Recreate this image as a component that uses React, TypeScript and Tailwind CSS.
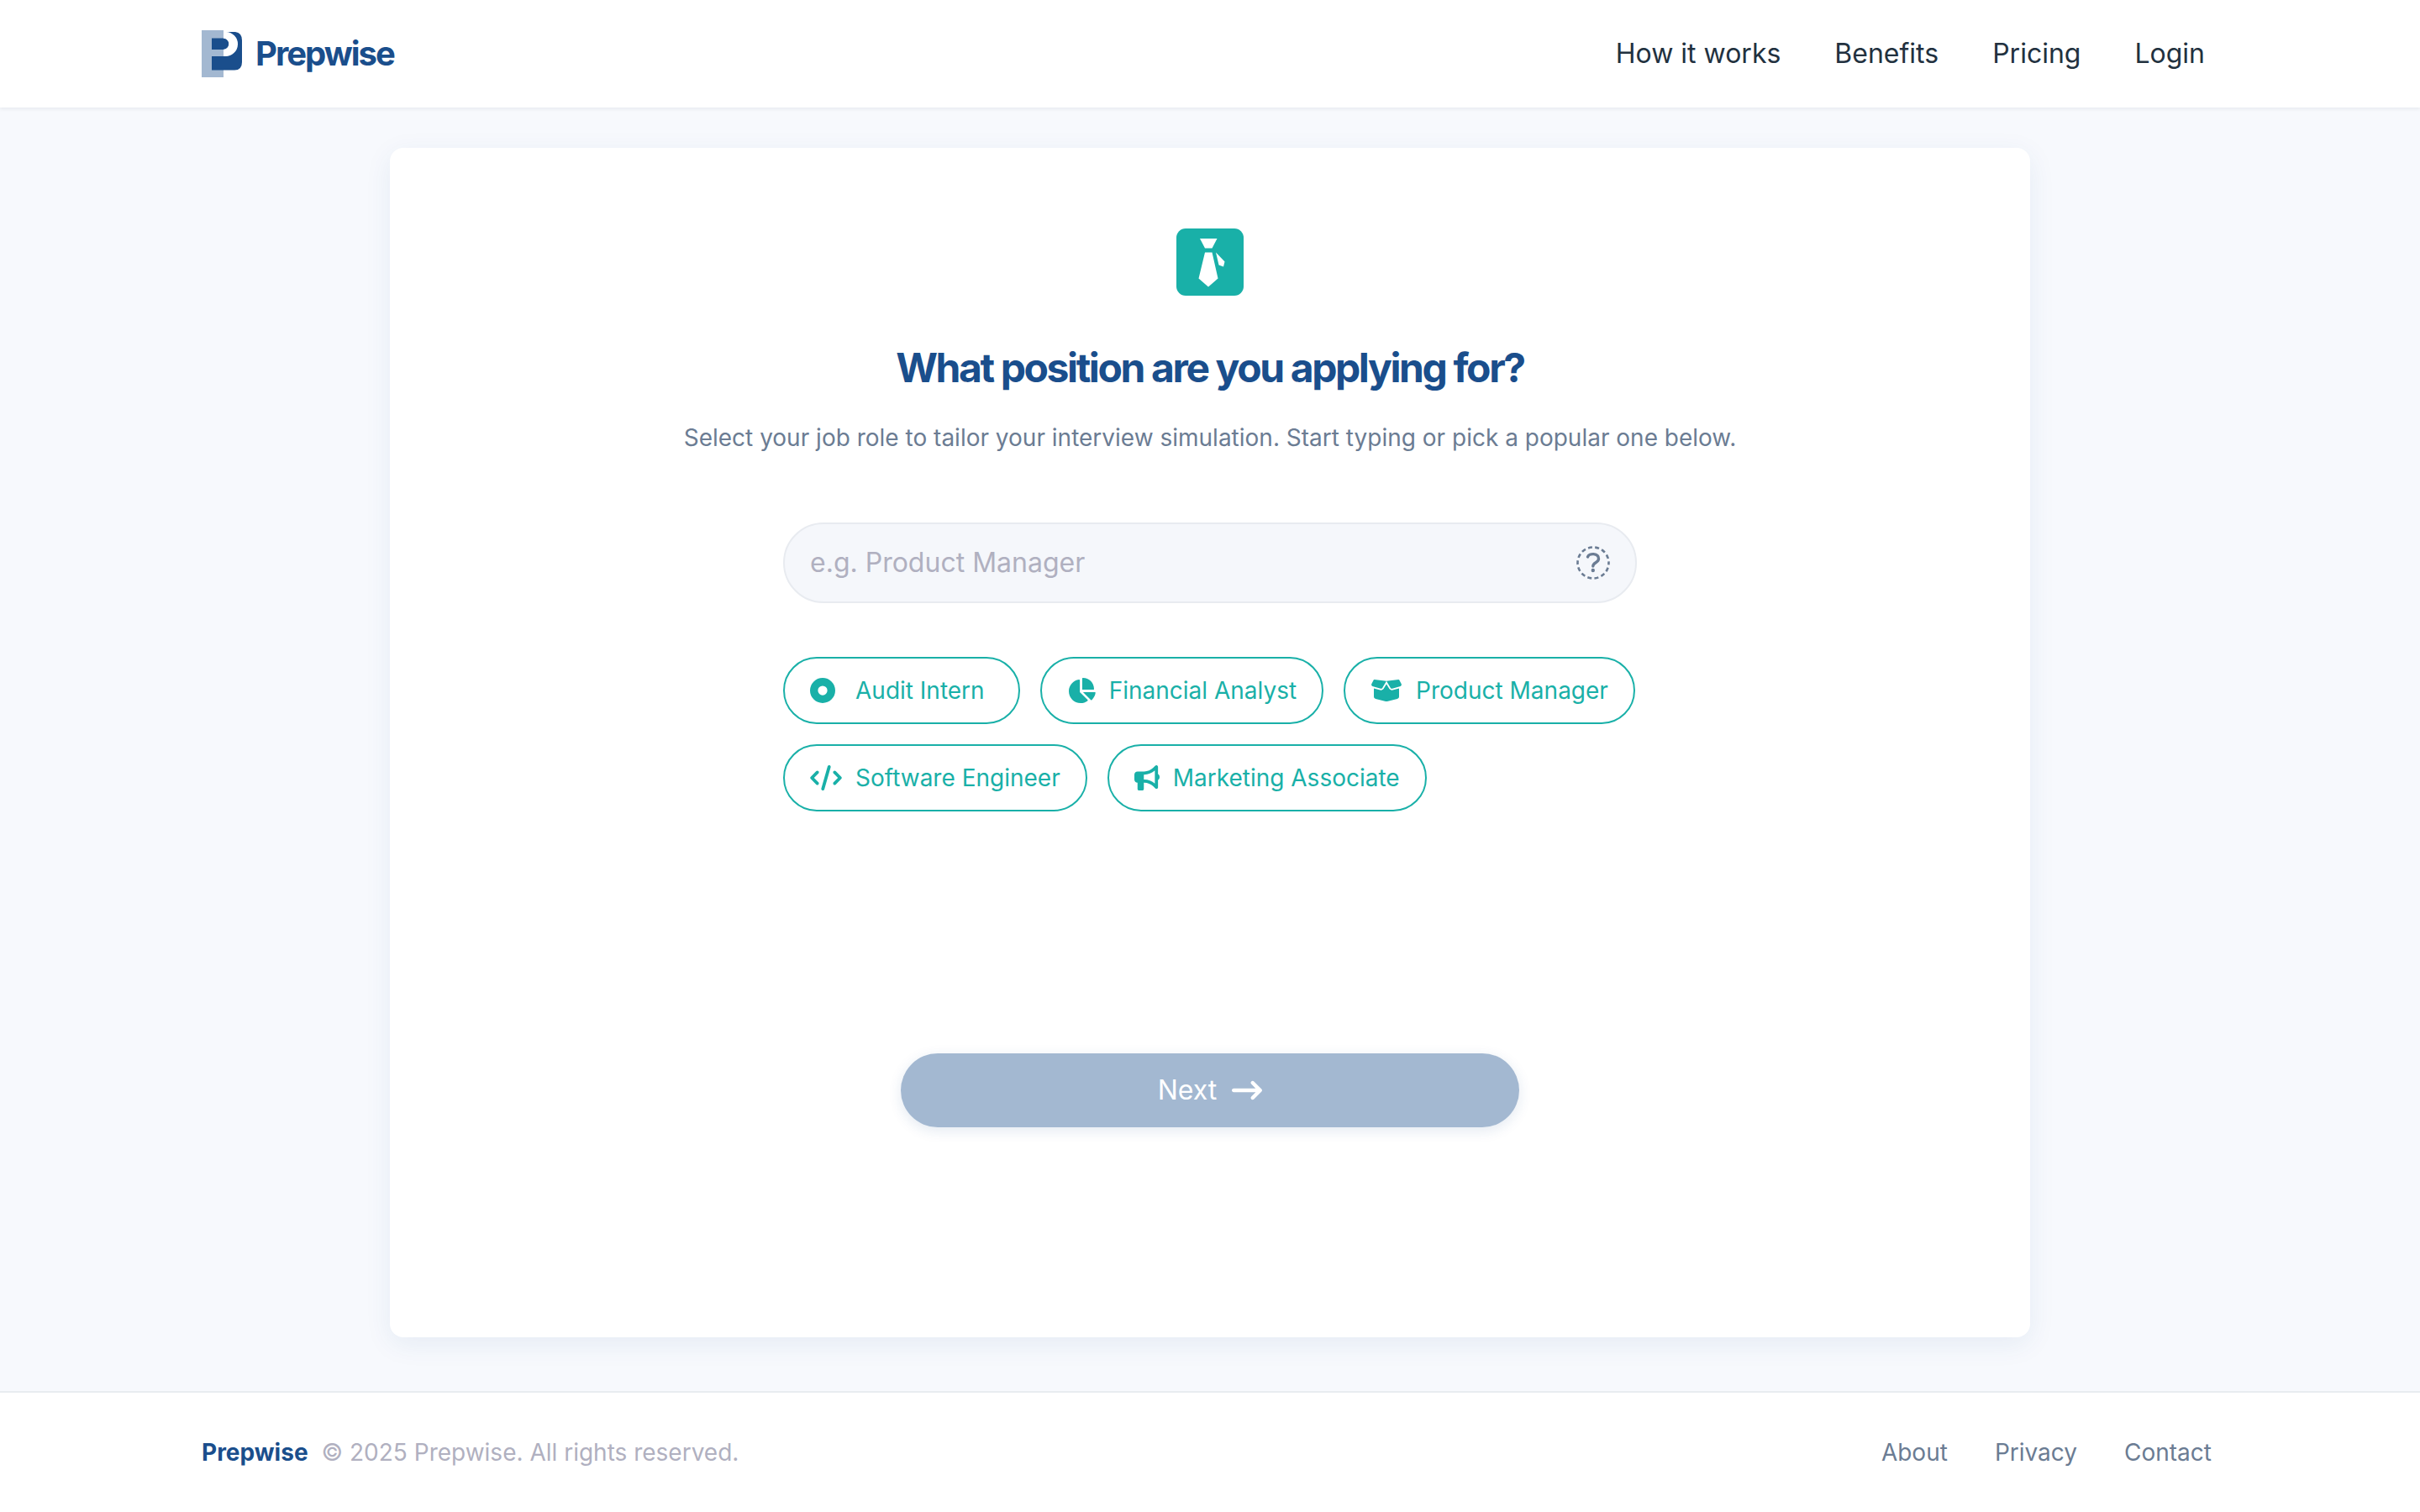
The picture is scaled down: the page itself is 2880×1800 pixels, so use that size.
import { FaArrowRightLong, FaBoxOpen, FaBullhorn, FaChartPie, FaCircleDot, FaCode } from "react-icons/fa6";

const navLinks = ["How it works", "Benefits", "Pricing", "Login"];
const footerLinks = ["About", "Privacy", "Contact"];

const roles = [
  { label: "Audit Intern", icon: <FaCircleDot className="mr-2 size-[30px]" />, padding: "pl-[30px] pr-10" },
  { label: "Financial Analyst", icon: <FaChartPie className="h-[30px] w-[34px]" />, padding: "px-[30px]" },
  { label: "Product Manager", icon: <FaBoxOpen className="h-[30px] w-[38px]" />, padding: "px-[30px]" },
  { label: "Software Engineer", icon: <FaCode className="h-[30px] w-[38px]" />, padding: "px-[30px]" },
  { label: "Marketing Associate", icon: <FaBullhorn className="size-[30px]" />, padding: "px-[30px]" },
];

function Logo() {
  return (
    <svg viewBox="0 0 48 56" className="h-14 w-12" aria-hidden="true">
      <path d="M0 0H26V56H0Z" fill="#a3b8d1" />
      <path
        d="M12 9.500H25.500A6.750 6.750 0 0 1 25.500 23H12ZM29 2H40Q48 3 48 12V38Q48 47.500 39 47.500H12V31H28A14.400 14.400 0 0 0 29 2Z"
        fill="#1a4e8c"
      />
      <path d="M26 2.500H29A14 14 0 0 1 26 30.500V23A6.750 6.750 0 0 0 26 9.500Z" fill="#fff" />
    </svg>
  );
}

function TieBadge() {
  return (
    <svg viewBox="0 0 80 80" className="size-20" aria-hidden="true">
      <rect width="80" height="80" rx="11" fill="#19b0a8" />
      <path
        d="M28 12H48.500L42.500 23.500H34ZM34 28.500H42.500L49.500 59.500L38 69.500L26.500 59.500ZM47 28.500L57.500 39.500L56 45.500L50.500 43.500Z"
        fill="#fff"
      />
    </svg>
  );
}

function HelpIcon() {
  return (
    <svg viewBox="0 0 40 40" className="size-10" fill="none" stroke="#6b7c93" aria-hidden="true">
      <circle cx="20" cy="20" r="18.500" strokeWidth="2.600" strokeDasharray="4.900 3.403" strokeDashoffset="2.450" />
      <path d="M13.500 13C15 8.300 26.500 8 26.500 15.300C26.500 20 19.800 19.500 19.800 24" strokeWidth="3.400" strokeLinecap="round" />
      <circle cx="19.800" cy="29" r="2.200" fill="#6b7c93" stroke="none" />
    </svg>
  );
}

export default function App() {
  return (
    <div className="flex min-h-screen flex-col bg-[#f7f9fd] font-['Inter',sans-serif] text-[#22313f]">
      <header className="h-32 bg-white shadow-[0_2px_4px_rgba(34,49,63,0.07)]">
        <div className="mx-auto flex h-full max-w-[2400px] items-center justify-between">
          <a href="#home" className="flex items-center gap-4 text-[40px] leading-none font-bold tracking-tighter text-[#1a4e8c]">
            <Logo />
            Prepwise
          </a>
          <nav className="flex gap-16 pr-4 text-[32px] leading-10">
            {navLinks.map((label) => (
              <a key={label} href="#nav">{label}</a>
            ))}
          </nav>
        </div>
      </header>

      <main className="flex grow flex-col items-center px-12 pt-12 pb-16">
        <section className="flex w-full max-w-[1952px] grow flex-col items-center rounded-2xl bg-white pt-24 shadow-[0_8px_32px_rgba(26,78,140,0.08)]">
          <TieBadge />
          <h1 className="mt-14 text-5xl leading-[60px] font-bold tracking-tighter text-[#1a4e8c]">
            What position are you applying for?
          </h1>
          <p className="mt-8 text-[28px] leading-[42px] text-[#6b7c93]">
            Select your job role to tailor your interview simulation. Start typing or pick a popular one below.
          </p>
          <div className="mt-20 w-full max-w-[1016px]">
            <div className="flex h-24 items-center rounded-full border-2 border-[#e8ebf0] bg-[#f5f7fb] px-[30px]">
              <input
                type="text"
                aria-label="Job role"
                placeholder="e.g. Product Manager"
                className="min-w-0 grow bg-transparent text-[32px] leading-10 outline-none placeholder:text-[#b0b0c0]"
              />
              <button type="button" aria-label="Help">
                <HelpIcon />
              </button>
            </div>
            <div className="mt-16 flex flex-wrap gap-6">
              {roles.map(({ label, icon, padding }) => (
                <button
                  key={label}
                  type="button"
                  className={`flex h-20 items-center gap-4 rounded-full border-2 border-[#19b0a8] text-[28px] leading-10 text-[#19b0a8] ${padding}`}
                >
                  {icon}
                  {label}
                </button>
              ))}
            </div>
          </div>
          <button
            type="button"
            className="mt-72 flex h-[88px] w-full max-w-[736px] items-center justify-center gap-[18px] rounded-full bg-[#a3b8d1] text-[32px] text-white shadow-[0_4px_16px_rgba(26,78,140,0.12)]"
          >
            Next
            <FaArrowRightLong className="size-9" />
          </button>
        </section>
      </main>

      <footer className="border-t-2 border-[#e8ecf0] bg-white">
        <div className="mx-auto flex h-[142px] max-w-[2400px] items-center justify-between text-[28px] leading-10">
          <p className="flex gap-4 text-[#b0b0c0]">
            <strong className="font-bold text-[#1a4e8c]">Prepwise</strong>
            © 2025 Prepwise. All rights reserved.
          </p>
          <nav className="flex gap-14 pr-2 text-[#6b7c93]">
            {footerLinks.map((label) => (
              <a key={label} href="#footer">{label}</a>
            ))}
          </nav>
        </div>
      </footer>
    </div>
  );
}
